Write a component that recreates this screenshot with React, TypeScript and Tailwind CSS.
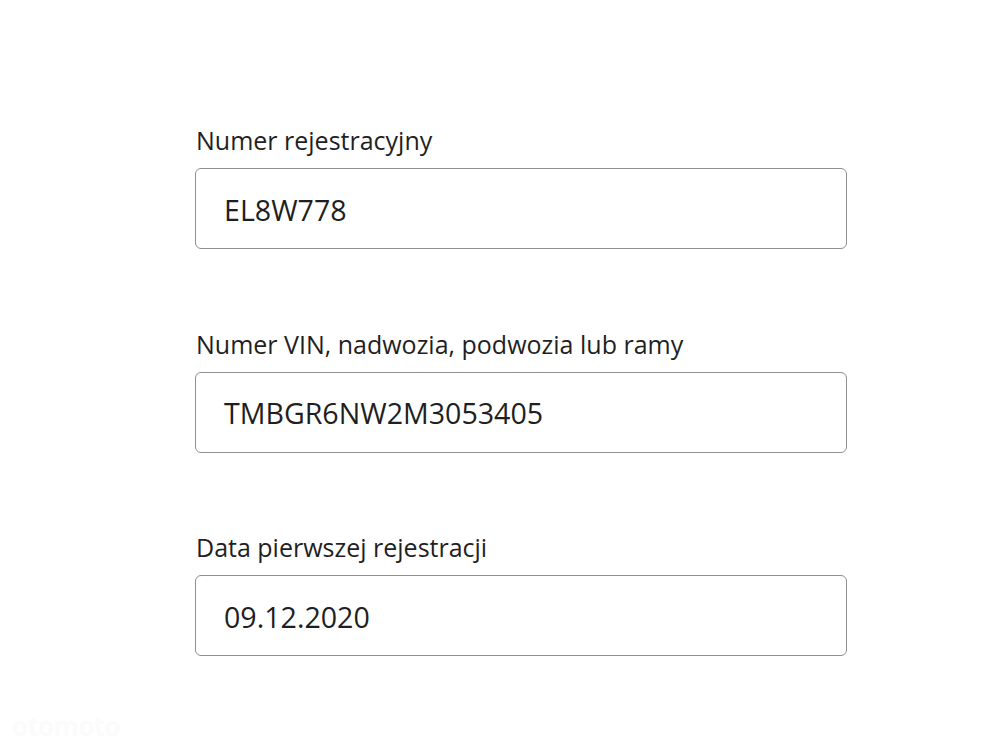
import React from "react";

const fields = [
  { label: "Numer rejestracyjny", value: "EL8W778" },
  { label: "Numer VIN, nadwozia, podwozia lub ramy", value: "TMBGR6NW2M3053405" },
  { label: "Data pierwszej rejestracji", value: "09.12.2020" },
];

export default function App() {
  return (
    <div
      className="relative w-[1000px] h-[750px] bg-white overflow-hidden text-[#1f1f1f]"
      style={{ fontFamily: '"Open Sans", "Noto Sans", sans-serif' }}
    >
      <div className="flex flex-col gap-[78.5px] pl-[195px] pt-[124px]">
        {fields.map((f) => (
          <div key={f.label} className="flex flex-col">
            <div className="text-[25px] leading-[32px] pl-[1px]">{f.label}</div>
            <div className="mt-[12px] w-[652px] h-[81px] rounded-[6px] border border-[#8f8f8f] flex items-center pl-[28px]">
              <span className="text-[28.6px] leading-[36px] pt-[2px]">{f.value}</span>
            </div>
          </div>
        ))}
      </div>
      <div className="absolute left-[12px] top-[710px] text-[26px] leading-[32px] font-bold text-[#fbfbfb] tracking-tight">
        otomoto
      </div>
    </div>
  );
}
